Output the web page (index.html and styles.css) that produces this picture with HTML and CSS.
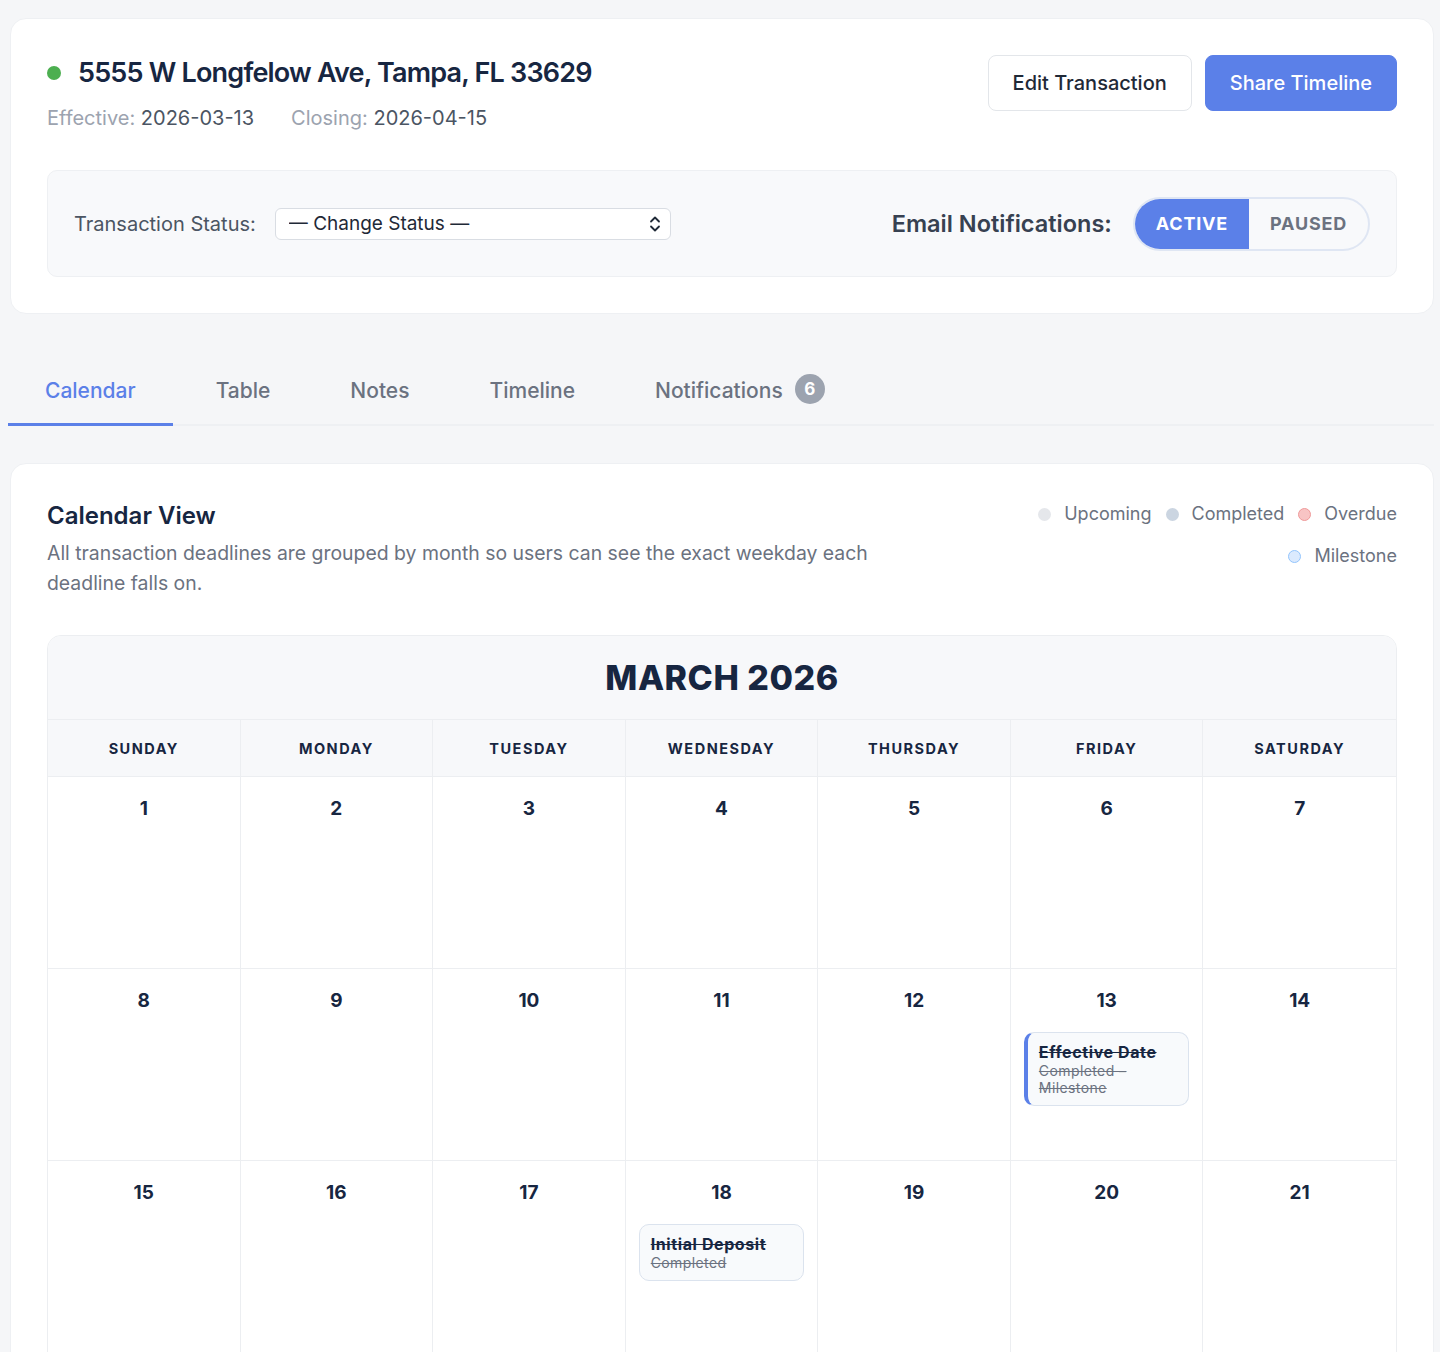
FILE: index.html
```html
<!DOCTYPE html>
<html lang="en">
<head>
    <meta charset="UTF-8">
    <meta name="viewport" content="width=device-width, initial-scale=1.0">
    <title>5555 W Longfelow Ave - Transaction</title>
    <link rel="stylesheet" href="styles.css">
</head>
<body>
    <div class="page">
        <section class="card summary">
            <div class="summary-head">
                <div>
                    <h1 class="address"><span class="status-dot"></span>5555 W Longfelow Ave, Tampa, FL 33629</h1>
                    <div class="dates">
                        <span><span class="muted">Effective:</span> 2026-03-13</span>
                        <span><span class="muted">Closing:</span> 2026-04-15</span>
                    </div>
                </div>
                <div class="actions">
                    <button class="btn btn-outline">Edit Transaction</button>
                    <button class="btn btn-primary">Share Timeline</button>
                </div>
            </div>

            <div class="status-panel">
                <div class="status-field">
                    <label for="status">Transaction Status:</label>
                    <div class="select-wrap">
                        <select id="status">
                            <option>— Change Status —</option>
                            <option>Pending</option>
                            <option>Closed</option>
                        </select>
                        <svg class="select-arrow" width="12" height="18" viewBox="0 0 12 18" fill="none" stroke="#1f2937" stroke-width="1.8" stroke-linecap="round" stroke-linejoin="round">
                            <path d="M2 6.5 6 2.5l4 4"/>
                            <path d="M2 11.5l4 4 4-4"/>
                        </svg>
                    </div>
                </div>
                <div class="notify-field">
                    <span class="notify-label">Email Notifications:</span>
                    <div class="toggle">
                        <button class="toggle-btn on">Active</button>
                        <button class="toggle-btn">Paused</button>
                    </div>
                </div>
            </div>
        </section>

        <nav class="tabs">
            <a href="#" class="tab active">Calendar</a>
            <a href="#" class="tab">Table</a>
            <a href="#" class="tab">Notes</a>
            <a href="#" class="tab">Timeline</a>
            <a href="#" class="tab tab-notify">Notifications <span class="badge">6</span></a>
        </nav>

        <section class="card calendar-card">
            <div class="calendar-head">
                <div class="calendar-intro">
                    <h2>Calendar View</h2>
                    <p>All transaction deadlines are grouped by month so users can see the exact weekday each deadline falls on.</p>
                </div>
                <ul class="legend">
                    <li><span class="dot upcoming"></span>Upcoming</li>
                    <li><span class="dot completed"></span>Completed</li>
                    <li><span class="dot overdue"></span>Overdue</li>
                    <li><span class="dot milestone"></span>Milestone</li>
                </ul>
            </div>

            <div class="month">
                <div class="month-title">MARCH 2026</div>
                <div class="grid">
                    <div class="weekday">Sunday</div>
                    <div class="weekday">Monday</div>
                    <div class="weekday">Tuesday</div>
                    <div class="weekday">Wednesday</div>
                    <div class="weekday">Thursday</div>
                    <div class="weekday">Friday</div>
                    <div class="weekday">Saturday</div>

                    <div class="day"><span class="num">1</span></div>
                    <div class="day"><span class="num">2</span></div>
                    <div class="day"><span class="num">3</span></div>
                    <div class="day"><span class="num">4</span></div>
                    <div class="day"><span class="num">5</span></div>
                    <div class="day"><span class="num">6</span></div>
                    <div class="day"><span class="num">7</span></div>

                    <div class="day"><span class="num">8</span></div>
                    <div class="day"><span class="num">9</span></div>
                    <div class="day"><span class="num">10</span></div>
                    <div class="day"><span class="num">11</span></div>
                    <div class="day"><span class="num">12</span></div>
                    <div class="day">
                        <span class="num">13</span>
                        <div class="event done milestone-event">
                            <div class="event-title">Effective Date</div>
                            <div class="event-meta">Completed – Milestone</div>
                        </div>
                    </div>
                    <div class="day"><span class="num">14</span></div>

                    <div class="day"><span class="num">15</span></div>
                    <div class="day"><span class="num">16</span></div>
                    <div class="day"><span class="num">17</span></div>
                    <div class="day">
                        <span class="num">18</span>
                        <div class="event done">
                            <div class="event-title">Initial Deposit</div>
                            <div class="event-meta">Completed</div>
                        </div>
                    </div>
                    <div class="day"><span class="num">19</span></div>
                    <div class="day"><span class="num">20</span></div>
                    <div class="day"><span class="num">21</span></div>

                    <div class="day"><span class="num">22</span></div>
                    <div class="day"><span class="num">23</span></div>
                    <div class="day"><span class="num">24</span></div>
                    <div class="day"><span class="num">25</span></div>
                    <div class="day"><span class="num">26</span></div>
                    <div class="day"><span class="num">27</span></div>
                    <div class="day"><span class="num">28</span></div>

                    <div class="day"><span class="num">29</span></div>
                    <div class="day"><span class="num">30</span></div>
                    <div class="day"><span class="num">31</span></div>
                    <div class="day empty"></div>
                    <div class="day empty"></div>
                    <div class="day empty"></div>
                    <div class="day empty"></div>
                </div>
            </div>
        </section>
    </div>
</body>
</html>
```

FILE: styles.css
```css
body {
    font-family: 'Inter', 'Noto Sans', sans-serif;
    margin: 0;
    padding: 0;
    background-color: #f5f6f8;
    color: #172641;
}

.page {
    padding: 18px 6px 0 10px;
}

.card {
    background: #fff;
    border: 1px solid #eef0f3;
    border-radius: 16px;
    padding: 36px;
}

/* transaction summary */
.summary-head {
    display: flex;
    justify-content: space-between;
    align-items: flex-start;
}

.address {
    display: flex;
    align-items: center;
    margin: 0;
    font-size: 27px;
    line-height: 36px;
    font-weight: 600;
    letter-spacing: -0.8px;
    color: #172641;
}

.status-dot {
    width: 14px;
    height: 14px;
    border-radius: 50%;
    background: #4caf50;
    margin-right: 17px;
}

.dates {
    display: flex;
    gap: 37px;
    margin-top: 13px;
    font-size: 20px;
    line-height: 28px;
    color: #4b5563;
}

.muted {
    color: #9ca3af;
}

.actions {
    display: flex;
    gap: 13px;
}

.btn {
    font-family: inherit;
    font-size: 20px;
    font-weight: 500;
    height: 56px;
    padding: 0 24px;
    border-radius: 8px;
    cursor: pointer;
}

.btn-outline {
    background: #fff;
    color: #1f2937;
    border: 1px solid #e3e6ea;
}

.btn-primary {
    background: #5b80e8;
    color: #fff;
    border: 1px solid #5b80e8;
}

.status-panel {
    display: flex;
    justify-content: space-between;
    align-items: center;
    height: 107px;
    box-sizing: border-box;
    margin-top: 38px;
    padding: 0 26px;
    background: #f8f9fb;
    border: 1px solid #eef0f3;
    border-radius: 10px;
}

.status-field {
    display: flex;
    align-items: center;
    gap: 19px;
}

.status-field label {
    font-size: 20px;
    color: #4b5563;
}

.select-wrap {
    position: relative;
}

.select-wrap select {
    -webkit-appearance: none;
    appearance: none;
    width: 396px;
    height: 32px;
    padding: 0 13px;
    font-family: inherit;
    font-size: 19px;
    color: #1f2937;
    background: #fff;
    border: 1px solid #d9dde3;
    border-radius: 6px;
}

.select-arrow {
    position: absolute;
    right: 10px;
    top: 7px;
    pointer-events: none;
}

.notify-field {
    display: flex;
    align-items: center;
    gap: 21px;
}

.notify-label {
    font-size: 23.5px;
    font-weight: 600;
    color: #374151;
}

.toggle {
    display: flex;
    height: 54px;
    box-sizing: border-box;
    border: 2px solid #dfe6f3;
    border-radius: 27px;
    overflow: hidden;
    background: #f8f9fb;
}

.toggle-btn {
    border: none;
    background: transparent;
    font-family: inherit;
    font-size: 18px;
    font-weight: 700;
    letter-spacing: 0.8px;
    text-transform: uppercase;
    color: #6b7280;
    padding: 0 21px;
    cursor: pointer;
}

.toggle-btn.on {
    background: #5b80e8;
    color: #fff;
}

/* tabs */
.tabs {
    display: flex;
    gap: 6px;
    margin: 42px 0 37px -2px;
    border-bottom: 2px solid #eef0f3;
}

.tab {
    display: flex;
    align-items: center;
    gap: 12px;
    padding: 22px 37px 19px;
    margin-bottom: -2px;
    font-size: 21px;
    line-height: 26px;
    font-weight: 500;
    color: #6b7280;
    text-decoration: none;
    border-bottom: 3px solid transparent;
}

.tab.active {
    color: #5b80e8;
    border-bottom-color: #5b80e8;
}

.badge {
    display: inline-flex;
    justify-content: center;
    align-items: center;
    width: 30px;
    height: 30px;
    border-radius: 50%;
    background: #9ca3af;
    color: #fff;
    font-size: 17px;
    font-weight: 700;
    margin-top: -4px;
}

/* calendar */
.calendar-card {
    padding-top: 36px;
    border-bottom-left-radius: 0;
    border-bottom-right-radius: 0;
}

.calendar-head {
    display: flex;
    justify-content: space-between;
    align-items: flex-start;
}

.calendar-intro h2 {
    margin: 0;
    font-size: 24px;
    line-height: 32px;
    font-weight: 600;
    color: #172641;
}

.calendar-intro p {
    max-width: 850px;
    margin: 6px 0 0;
    font-size: 19.4px;
    line-height: 30px;
    color: #6b7280;
}

.legend {
    display: flex;
    flex-wrap: wrap;
    justify-content: flex-end;
    gap: 14px 14px;
    width: 370px;
    margin: 0;
    padding: 0;
    list-style: none;
}

.legend li {
    display: flex;
    align-items: center;
    gap: 13px;
    font-size: 18px;
    line-height: 28px;
    color: #6b7280;
}

.dot {
    width: 13px;
    height: 13px;
    box-sizing: border-box;
    border-radius: 50%;
}

.dot.upcoming { background: #e5e7eb; }
.dot.completed { background: #cbd5e1; }
.dot.overdue { background: #f8c4c4; border: 1px solid #ef9a9a; }
.dot.milestone { background: #dbeafe; border: 1px solid #93c5fd; }

.month {
    margin-top: 37px;
    border: 1px solid #eceef1;
    border-radius: 14px;
    overflow: hidden;
}

.month-title {
    height: 83px;
    display: flex;
    justify-content: center;
    align-items: center;
    background: #f7f8fa;
    font-size: 34px;
    font-weight: 800;
    letter-spacing: 0.5px;
    color: #172641;
    border-bottom: 1px solid #eceef1;
}

.grid {
    display: grid;
    grid-template-columns: repeat(7, 1fr);
}

.weekday {
    height: 56px;
    display: flex;
    justify-content: center;
    align-items: center;
    background: #f7f8fa;
    font-size: 14.5px;
    font-weight: 700;
    letter-spacing: 1.5px;
    text-transform: uppercase;
    color: #172641;
    border-right: 1px solid #eceef1;
    border-bottom: 1px solid #eceef1;
}

.day {
    height: 192px;
    box-sizing: border-box;
    padding: 20px 13px 13px;
    border-right: 1px solid #eceef1;
    border-bottom: 1px solid #eceef1;
    text-align: center;
}

.weekday:nth-child(7n),
.day:nth-child(7n) {
    border-right: none;
}

.num {
    display: block;
    font-size: 19px;
    line-height: 24px;
    font-weight: 700;
    color: #172641;
}

.event {
    margin-top: 19px;
    padding: 9px 11px;
    text-align: left;
    background: #f8fafc;
    border: 1px solid #dbe3ee;
    border-radius: 10px;
}

.milestone-event {
    border-left: 4px solid #5b80e8;
}

.event-title {
    font-size: 16px;
    line-height: 20px;
    font-weight: 700;
    letter-spacing: 0.6px;
    color: #172641;
}

.event-meta {
    font-size: 14px;
    line-height: 17px;
    letter-spacing: 0.4px;
    color: #6b7280;
}

.event.done .event-title,
.event.done .event-meta {
    text-decoration: line-through;
}
```
